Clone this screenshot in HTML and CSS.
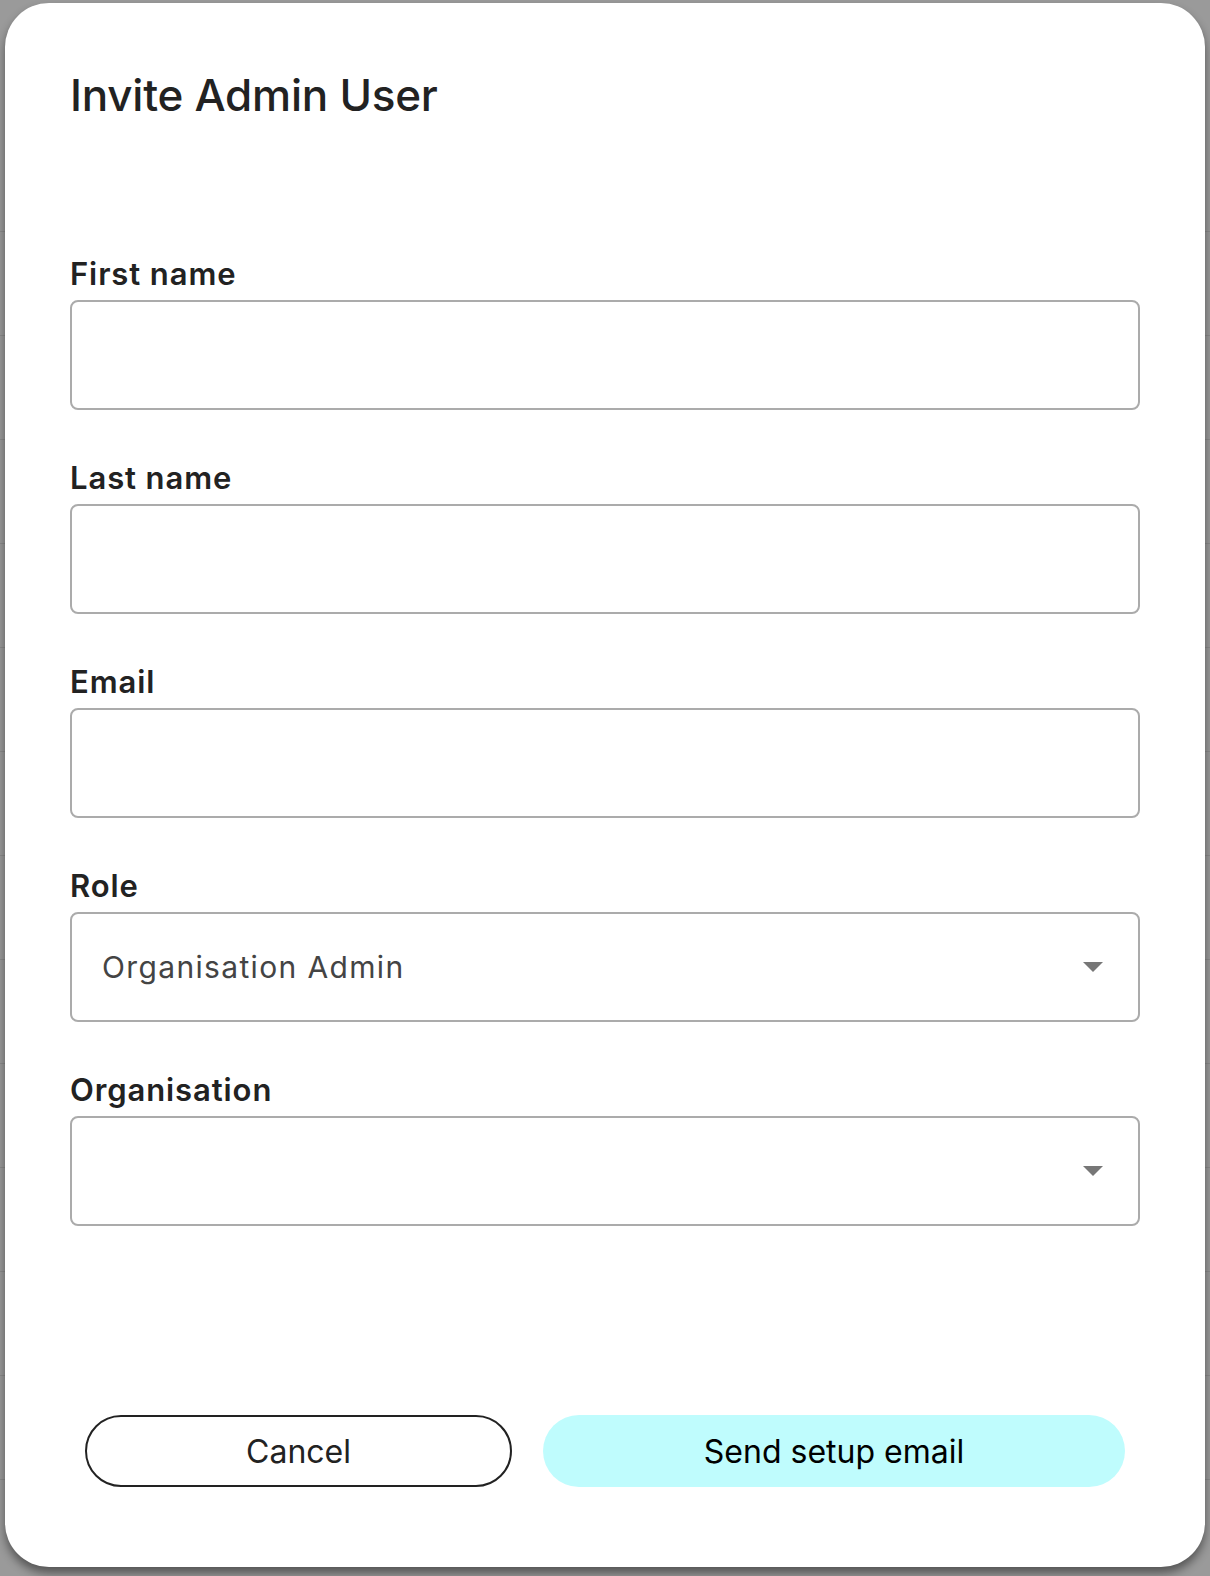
FILE: index.html
```html
<!DOCTYPE html>
<html lang="en">
<head>
<meta charset="utf-8">
<title>Invite Admin User</title>
<link rel="stylesheet" href="styles.css">
</head>
<body>
<div class="modal" role="dialog" aria-labelledby="modal-title">
  <h1 class="modal-title" id="modal-title">Invite Admin User</h1>
  <form class="form">
    <div class="field">
      <label class="field-label" for="first">First name</label>
      <input class="input" id="first" type="text">
    </div>
    <div class="field">
      <label class="field-label" for="last">Last name</label>
      <input class="input" id="last" type="text">
    </div>
    <div class="field">
      <label class="field-label" for="email">Email</label>
      <input class="input" id="email" type="email">
    </div>
    <div class="field">
      <span class="field-label">Role</span>
      <div class="select">
        <span class="select-value">Organisation Admin</span>
        <span class="select-caret"></span>
      </div>
    </div>
    <div class="field">
      <span class="field-label">Organisation</span>
      <div class="select">
        <span class="select-value"></span>
        <span class="select-caret"></span>
      </div>
    </div>
  </form>
  <div class="actions">
    <button class="btn btn-cancel" type="button">Cancel</button>
    <button class="btn btn-primary" type="button">Send setup email</button>
  </div>
</div>
</body>
</html>
```
FILE: styles.css
```css
* { box-sizing: border-box; }

html, body {
  margin: 0;
  padding: 0;
}

body {
  width: 1210px;
  height: 1576px;
  overflow: hidden;
  padding: 3px 5px 0 5px;
  font-family: "Inter", "Noto Sans", sans-serif;
  background-color: #9a9a9a;
  background-image: repeating-linear-gradient(
    to bottom,
    #8b8b8b 0px,
    #8b8b8b 1px,
    transparent 1px,
    transparent 104px
  );
  background-position: 0 231px;
  background-size: 100% 1250px;
  background-repeat: no-repeat;
}

.modal {
  width: 1200px;
  height: 1564px;
  background: #ffffff;
  border-radius: 44px;
  box-shadow: 0 6px 10px rgba(0, 0, 0, 0.45);
  padding: 65px 65px 80px 65px;
  display: flex;
  flex-direction: column;
}

.modal-title {
  margin: 0 0 134px 0;
  font-size: 44px;
  line-height: 54px;
  font-weight: 500;
  color: #222222;
  letter-spacing: -0.25px;
}

.form {
  display: flex;
  flex-direction: column;
  gap: 50px;
}

.field {
  display: flex;
  flex-direction: column;
  gap: 8px;
}

.field-label {
  font-size: 31px;
  line-height: 36px;
  font-weight: 600;
  color: #222222;
  letter-spacing: 0.9px;
}

.input,
.select {
  width: 100%;
  height: 110px;
  border: 2px solid #ababab;
  border-radius: 8px;
  background: #ffffff;
  font-family: inherit;
  font-size: 30px;
  padding: 0 30px;
  outline: none;
}

.select {
  display: flex;
  align-items: center;
  justify-content: space-between;
  padding: 0 35px 0 30px;
}

.select-value {
  font-size: 30px;
  color: #444444;
  letter-spacing: 1.35px;
}

.select-caret {
  width: 0;
  height: 0;
  border-left: 10px solid transparent;
  border-right: 10px solid transparent;
  border-top: 10px solid #777777;
}

.actions {
  margin-top: 189px;
  display: flex;
  justify-content: center;
  gap: 31px;
}

.btn {
  height: 72px;
  border-radius: 36px;
  font-family: inherit;
  font-size: 32px;
  font-weight: 400;
  cursor: pointer;
}

.btn-cancel {
  width: 427px;
  background: #ffffff;
  border: 2px solid #222222;
  color: #222222;
}

.btn-primary {
  width: 582px;
  background: #bffcfd;
  border: none;
  color: #000000;
}
```
